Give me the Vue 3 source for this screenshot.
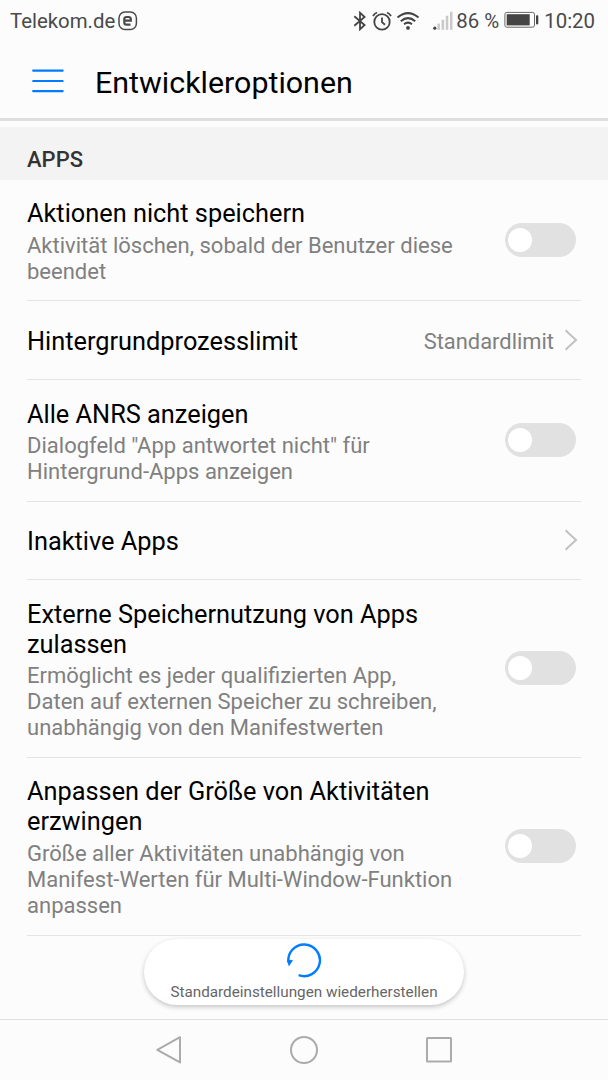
<script setup>
import { ref } from 'vue'

const entries = ref([
  {
    title: 'Aktionen nicht speichern',
    summary: 'Aktivität löschen, sobald der Benutzer diese\nbeendet',
    enabled: false
  },
  { title: 'Hintergrundprozesslimit', value: 'Standardlimit' },
  {
    title: 'Alle ANRS anzeigen',
    summary: 'Dialogfeld "App antwortet nicht" für\nHintergrund-Apps anzeigen',
    enabled: false
  },
  { title: 'Inaktive Apps' },
  {
    title: 'Externe Speichernutzung von Apps\nzulassen',
    summary:
      'Ermöglicht es jeder qualifizierten App,\nDaten auf externen Speicher zu schreiben,\nunabhängig von den Manifestwerten',
    enabled: false
  },
  {
    title: 'Anpassen der Größe von Aktivitäten\nerzwingen',
    summary:
      'Größe aller Aktivitäten unabhängig von\nManifest-Werten für Multi-Window-Funktion\nanpassen',
    enabled: false
  }
])

const toggle = (entry) => {
  entry.enabled = !entry.enabled
}
</script>

<template>
  <div class="screen">
    <div class="status">
      <span class="carrier">Telekom.de</span>
      <svg class="edge" width="20" height="20" viewBox="0 0 20 20" fill="none" stroke="#4a4a4a">
        <rect x="1" y="1" width="17.4" height="17.6" rx="6" stroke-width="1.5" />
        <path d="M6.2 9.6h6.6V8.2Q12.8 6 10.6 6H8.5Q6.3 6 6.3 8.2v3.2q0 2.2 2.2 2.2h4" stroke-width="2.2" />
      </svg>
      <span class="spacer"></span>
      <svg class="bluetooth" width="14" height="20" viewBox="0 0 14 20" fill="none" stroke="#444" stroke-width="1.8">
        <path d="M1.3 5.2 11.6 14 7 18.3V1.7L11.6 6 1.3 14.8" />
      </svg>
      <svg class="alarm" width="20" height="20" viewBox="0 0 20 20" fill="none" stroke="#444" stroke-width="1.8">
        <circle cx="10" cy="10.9" r="7.7" />
        <path d="M10 6.5v4.6l3 2.6M1 5.2Q2.2 2.7 5 1.5M19 5.2Q17.8 2.7 15 1.5" />
      </svg>
      <svg class="wifi" width="24" height="20" viewBox="0 0 24 20" fill="none" stroke="#444" stroke-width="2">
        <path d="M1.5 6.6Q12-2.4 22.5 6.6M4.8 10.2Q12 4 19.2 10.2M8 13.3Q12 10 16 13.3" />
        <circle cx="12" cy="16.9" r="1.9" fill="#444" stroke="none" />
      </svg>
      <svg class="signal" width="20" height="20" viewBox="0 0 20 20" fill="#c9c9c9">
        <circle cx="1.8" cy="17.2" r="1.6" fill="#444" />
        <rect x="4.4" y="12.6" width="2.5" height="6.2" />
        <rect x="8.6" y="8.8" width="2.5" height="10" />
        <rect x="12.8" y="4.8" width="2.5" height="14" />
        <rect x="17" y="0.8" width="2.5" height="18" />
      </svg>
      <span class="percent">86 %</span>
      <svg class="battery" width="36" height="18" viewBox="0 0 36 18">
        <rect x="0.9" y="1.4" width="29.6" height="14.8" rx="2" fill="none" stroke="#666" stroke-width="1" />
        <rect x="2.7" y="3.2" width="23" height="11.2" fill="#444" />
        <rect x="32" y="4.2" width="2.3" height="9.2" rx="0.8" fill="#444" />
      </svg>
      <span class="clock">10:20</span>
    </div>

    <header class="header">
      <svg width="32" height="26" viewBox="0 0 32 26" stroke="#007dff" stroke-width="2.2" stroke-linecap="round">
        <path d="M1.2 2.7h29.4M1.2 13h29.4M1.2 23.2h29.4" />
      </svg>
      <h1>Entwickleroptionen</h1>
    </header>

    <div class="category">APPS</div>

    <main class="list">
      <div v-for="entry in entries" :key="entry.title" class="row" :class="{ simple: !entry.summary }">
        <div class="text">
          <div class="title">{{ entry.title }}</div>
          <div v-if="entry.summary" class="summary">{{ entry.summary }}</div>
        </div>
        <button
          v-if="entry.summary"
          class="switch"
          :class="{ on: entry.enabled }"
          @click="toggle(entry)"
        ></button>
        <template v-else>
          <span class="value">{{ entry.value }}</span>
          <svg class="chevron" width="14" height="22" viewBox="0 0 14 22" fill="none" stroke="#c1c1c1" stroke-width="2">
            <path d="M1.5 1.2 12 11 1.5 20.8" />
          </svg>
        </template>
      </div>
    </main>

    <button class="restore">
      <svg width="36" height="36" viewBox="0 0 36 36">
        <path d="M2.5 20.5A15.8 15.8 0 1 1 12.6 33.1" fill="none" stroke="#007dff" stroke-width="2.4" />
        <path d="M1 17.4 7 18.3 2.8 24.4Z" fill="#007dff" />
      </svg>
      <span>Standardeinstellungen wiederherstellen</span>
    </button>

    <nav class="navbar">
      <svg width="28" height="30" viewBox="0 0 28 30">
        <path d="M25 2.2V27.4L2.3 14.8Z" />
      </svg>
      <svg width="30" height="30" viewBox="0 0 30 30">
        <circle cx="15" cy="15" r="13" />
      </svg>
      <svg width="28" height="28" viewBox="0 0 28 28">
        <rect x="2" y="2" width="24" height="23.6" rx="0.5" />
      </svg>
    </nav>
  </div>
</template>

<style>
body {
  margin: 0;
}
</style>

<style scoped>
.screen {
  position: relative;
  display: flex;
  flex-direction: column;
  width: 608px;
  height: 1080px;
  overflow: hidden;
  background: #fcfcfc;
  font-family: Roboto, "Liberation Sans", sans-serif;
  color: #000;
}

.status {
  display: flex;
  align-items: center;
  box-sizing: border-box;
  height: 40px;
  padding: 1px 13px 0 10px;
  font-size: 20.4px;
  color: #4a4a4a;
}

.edge {
  margin-left: 3px;
}

.spacer {
  flex: 1;
}

.alarm {
  margin-left: 5px;
}

.wifi {
  margin-left: 4px;
}

.signal {
  margin-left: 13px;
  margin-right: 3px;
}

.battery {
  margin: 0 4px 1px 5px;
}

.header {
  display: flex;
  align-items: center;
  box-sizing: border-box;
  height: 81px;
  padding: 4px 0 0 31.5px;
  border-bottom: 3px solid #dfdfdf;
}

h1 {
  margin: 2px 0 0 31.5px;
  font-size: 30.4px;
  font-weight: 400;
}

.category {
  box-sizing: border-box;
  height: 53px;
  margin-top: 6px;
  padding: 19px 27px 0;
  background: #f3f3f3;
  color: #333;
  font-size: 22px;
  font-weight: 500;
  line-height: 27px;
}

.row {
  display: flex;
  align-items: center;
  box-sizing: border-box;
  margin: 0 27px;
  padding: 19.4px 5px 15.6px 0;
  border-bottom: 1px solid #e4e4e4;
}

.row:last-child {
  padding-bottom: 16.6px;
}

.row.simple {
  height: 78.8px;
  padding: 0 3px 0 0;
}

.row.simple .title {
  margin-top: 3px;
}

.text {
  flex: 1;
  white-space: pre;
}

.title {
  font-size: 25.33px;
  line-height: 30px;
}

.summary {
  margin-top: 3.4px;
  color: #808080;
  font-size: 22.03px;
  line-height: 26px;
}

.value {
  margin-top: 2px;
  color: #808080;
  font-size: 21.9px;
}

.chevron {
  margin-left: 10px;
}

.switch {
  flex: none;
  width: 71px;
  height: 34px;
  margin-bottom: 4px;
  padding: 5px 3px;
  border: none;
  border-radius: 17px;
  background: #e1e1e1;
  cursor: pointer;
}

.switch::before {
  content: '';
  display: block;
  width: 24px;
  height: 24px;
  border-radius: 50%;
  background: #fff;
}

.switch.on {
  background: #007dff;
}

.switch.on::before {
  margin-left: auto;
}

/* floats over the end of the list */
.restore {
  position: absolute;
  left: 144px;
  bottom: 75px;
  display: flex;
  flex-direction: column;
  align-items: center;
  width: 320px;
  height: 66px;
  padding: 3px 0 0;
  border: none;
  border-radius: 33px;
  background: #fff;
  box-shadow: 0 2px 5px rgba(0, 0, 0, 0.22);
  color: #666;
  font-family: inherit;
  font-size: 15.25px;
}

.restore span {
  margin-top: 5px;
}

.navbar {
  display: flex;
  align-items: center;
  justify-content: center;
  gap: 106px;
  box-sizing: border-box;
  height: 61px;
  margin-top: auto;
  border-top: 1.5px solid #e1e1e1;
}

.navbar svg {
  fill: none;
  stroke: #ababab;
  stroke-width: 2;
  stroke-linejoin: round;
}
</style>
